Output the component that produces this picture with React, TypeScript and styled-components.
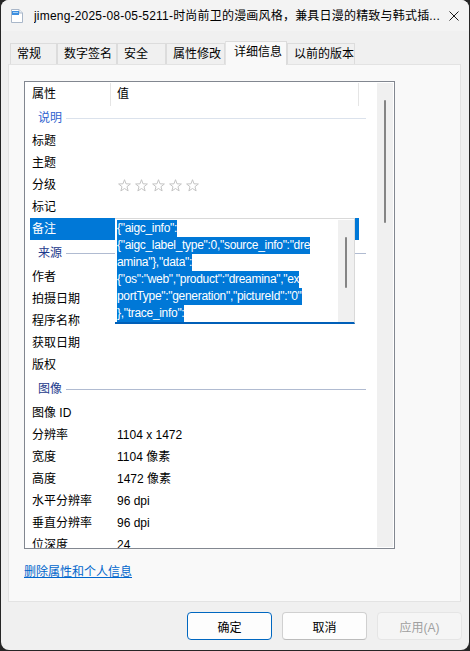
import React from 'react';
import styled, { createGlobalStyle } from 'styled-components';

const Global = createGlobalStyle`
  html, body { margin: 0; padding: 0; background: #262626; }
  body {
    font-family: "Liberation Sans", "Noto Sans CJK SC", sans-serif;
    font-size: 12px;
    color: #000;
  }
  * { box-sizing: border-box; }
`;

const Window = styled.div`
  width: 468px;
  height: 650px;
  margin-left: 1px;
  background: #f0f0f0;
  border-radius: 8px;
  overflow: hidden;
  display: flex;
  flex-direction: column;
`;

const TitleBar = styled.div`
  height: 31px;
  flex: none;
  display: flex;
  align-items: center;
  padding: 0 10px 0 9px;
  background: #f3f3f3;
`;

const TitleText = styled.div`
  flex: 1;
  margin-left: 10px;
  white-space: nowrap;
  overflow: hidden;
  line-height: 16px;
  letter-spacing: 0.2px;
`;

const CloseGlyph = styled.svg`
  width: 10px;
  height: 10px;
  flex: none;
`;

const TabStrip = styled.div`
  display: flex;
  align-items: flex-end;
  height: 24px;
  margin: 10px 0 -1px 9px;
  position: relative;
  z-index: 1;
`;

const Tab = styled.div<{ $w: number; $active?: boolean }>`
  width: ${p => p.$w}px;
  height: ${p => (p.$active ? 24 : 21)}px;
  margin-bottom: ${p => (p.$active ? 0 : 1)}px;
  padding: 0 0 ${p => (p.$active ? 3 : 0)}px ${p => (p.$active ? 8 : 6)}px;
  display: flex;
  align-items: center;
  background: ${p => (p.$active ? '#f9f9f9' : '#f0f0f0')};
  border: 1px solid #dcdcdc;
  border-bottom: none;
  border-left-color: ${p => (p.$active ? '#e3e3e3' : '#dcdcdc')};
  white-space: nowrap;
  line-height: 16px;
`;

const Panel = styled.div`
  height: 538px;
  margin: 0 8px 0 7px;
  background: #f9f9f9;
  border: 1px solid #e3e3e3;
  padding: 16px 0 0 15px;
  display: flex;
  flex-direction: column;
`;

const ListBox = styled.div`
  width: 371px;
  height: 468px;
  border: 1px solid #828790;
  background: #fff;
  display: flex;
`;

const ListContent = styled.div`
  position: relative;
  width: 352px;
  overflow: hidden;
  flex: none;
`;

const ScrollTrack = styled.div<{ $w: number }>`
  width: ${p => p.$w}px;
  margin: 1px 1px 1px 0;
  background: #f0f0f0;
  display: flex;
  justify-content: center;
  flex: none;
`;

const ScrollThumb = styled.div<{ $top: number; $h: number }>`
  width: 2px;
  height: ${p => p.$h}px;
  margin-top: ${p => p.$top}px;
  background: #858585;
  border-radius: 1px;
`;

const HeaderRow = styled.div`
  height: 24px;
  display: flex;
`;

const HeaderCell = styled.div<{ $w: number; $pad: number }>`
  width: ${p => p.$w}px;
  padding-left: ${p => p.$pad}px;
  line-height: 24px;
  flex: none;
`;

const HeaderDivider = styled.div`
  width: 1px;
  height: 23px;
  margin-top: 1px;
  background: #e5e5e5;
  flex: none;
`;

const GroupRow = styled.div<{ $h: number; $lit?: boolean }>`
  height: ${p => p.$h}px;
  display: flex;
  align-items: center;
  padding-left: 13px;
  color: ${p => (p.$lit ? '#2f63cf' : '#1d3a8c')};
  &::after {
    content: '';
    width: 300px;
    height: 1px;
    margin-left: 4px;
    background: ${p => (p.$lit ? '#dbe2ec' : '#b0bbd1')};
  }
`;

const GroupLabel = styled.span`
  width: 24px;
  white-space: nowrap;
  line-height: 16px;
`;

const Row = styled.div<{ $selected?: boolean }>`
  height: 22px;
  width: 329px;
  margin-left: 5px;
  display: flex;
  align-items: center;
  background: ${p => (p.$selected ? '#0078d7' : 'transparent')};
  color: ${p => (p.$selected ? '#fff' : '#000')};
`;

const NameCell = styled.div`
  width: 80px;
  padding-left: 2px;
  flex: none;
  white-space: nowrap;
  line-height: 16px;
`;

const ValueCell = styled.div`
  padding-left: 7px;
  display: flex;
  align-items: center;
  white-space: nowrap;
  line-height: 16px;
`;

const Stars = styled.div`
  display: flex;
  gap: 4px;
  margin-left: 1px;
`;

const EditBox = styled.div`
  position: absolute;
  left: 90px;
  top: 136px;
  width: 240px;
  height: 106px;
  background: #fff;
  border-top: 1px solid #d9d9d9;
  border-right: 1px solid #d9d9d9;
  border-bottom: 2px solid #005fb8;
  display: flex;
`;

const EditText = styled.div`
  flex: 1;
  padding: 1px 0 0 2px;
  overflow: hidden;
`;

const SelLine = styled.span`
  display: block;
  width: max-content;
  height: 17px;
  line-height: 17px;
  background: #0078d7;
  color: #fff;
  white-space: pre;
  letter-spacing: -0.3px;
`;

const EditScroll = styled.div`
  width: 16px;
  margin: 1px 0 0 0;
  background: #f0f0f0;
  display: flex;
  justify-content: center;
  flex: none;
`;

const LinkText = styled.a`
  margin-top: 15px;
  line-height: 16px;
  color: #0066cc;
  text-decoration: underline;
  align-self: flex-start;
  cursor: pointer;
`;

const ButtonRow = styled.div`
  display: flex;
  justify-content: flex-end;
  gap: 10px;
  margin-top: 10px;
  padding-right: 7px;
`;

const Button = styled.button<{ $kind?: 'default' | 'disabled' }>`
  width: 85px;
  height: 28px;
  border-radius: 4px;
  font-family: inherit;
  font-size: 12px;
  padding: 0;
  background: ${p => (p.$kind === 'disabled' ? '#f5f5f5' : '#fdfdfd')};
  color: ${p => (p.$kind === 'disabled' ? '#a0a0a0' : '#000')};
  border: 1px solid
    ${p =>
      p.$kind === 'default' ? '#0067c0' : p.$kind === 'disabled' ? '#e5e5e5' : '#d0d0d0'};
  border-bottom-color: ${p =>
    p.$kind === 'default' ? '#0067c0' : p.$kind === 'disabled' ? '#e5e5e5' : '#bcbcbc'};
`;

const Star = () => (
  <svg width="13" height="13" viewBox="0 0 13 13">
    <polygon
      points="6.5,0.7 8.03,4.8 12.4,4.98 8.97,7.7 10.14,11.92 6.5,9.5 2.86,11.92 4.03,7.7 0.6,4.98 4.97,4.8"
      fill="#fff"
      stroke="#c4c4c4"
      strokeWidth="1"
      strokeLinejoin="round"
    />
  </svg>
);

const FileIcon = () => (
  <svg width="14" height="16" viewBox="0 0 14 16">
    <path d="M1.5 1.5 H9 L12.5 5 V14.5 H1.5 Z" fill="#fff" stroke="#a9b7c9" />
    <path d="M9 1.5 V5 H12.5" fill="#e8eef5" stroke="#a9b7c9" />
    <rect x="2" y="3" width="7" height="4" fill="#3d8fe0" />
    <rect x="3" y="4" width="5" height="1" fill="#a7d0f5" />
  </svg>
);

const tabs: [string, number][] = [
  ['常规', 47],
  ['数字签名', 60],
  ['安全', 49],
  ['属性修改', 59],
  ['详细信息', 62],
  ['以前的版本', 68],
];

const descRows: [string, string][] = [
  ['标题', ''],
  ['主题', ''],
  ['分级', '*'],
  ['标记', ''],
  ['备注', ''],
];

const originRows = ['作者', '拍摄日期', '程序名称', '获取日期', '版权'];

const imageRows: [string, string][] = [
  ['图像 ID', ''],
  ['分辨率', '1104 x 1472'],
  ['宽度', '1104 像素'],
  ['高度', '1472 像素'],
  ['水平分辨率', '96 dpi'],
  ['垂直分辨率', '96 dpi'],
  ['位深度', '24'],
];

const commentLines = [
  '{"aigc_info":',
  '{"aigc_label_type":0,"source_info":"dre',
  'amina"},"data":',
  '{"os":"web","product":"dreamina","ex',
  'portType":"generation","pictureId":"0"',
  '},"trace_info":',
];

export default function App() {
  return (
    <>
      <Global />
      <Window>
        <TitleBar>
          <FileIcon />
          <TitleText>jimeng-2025-08-05-5211-时尚前卫的漫画风格，兼具日漫的精致与韩式插...</TitleText>
          <CloseGlyph viewBox="0 0 10 10">
            <path d="M0.5 0.5 L9.5 9.5 M9.5 0.5 L0.5 9.5" stroke="#1a1a1a" strokeWidth="1" />
          </CloseGlyph>
        </TitleBar>

        <TabStrip>
          {tabs.map(([label, w]) => (
            <Tab key={label} $w={w} $active={label === '详细信息'}>
              {label}
            </Tab>
          ))}
        </TabStrip>

        <Panel>
          <ListBox>
            <ListContent>
              <HeaderRow>
                <HeaderCell $w={85} $pad={7}>属性</HeaderCell>
                <HeaderDivider />
                <HeaderCell $w={247} $pad={6}>值</HeaderCell>
                <HeaderDivider />
              </HeaderRow>

              <GroupRow $h={24} $lit>
                <GroupLabel>说明</GroupLabel>
              </GroupRow>
              {descRows.map(([name, value]) => (
                <Row key={name} $selected={name === '备注'}>
                  <NameCell>{name}</NameCell>
                  <ValueCell>
                    {value === '*' ? (
                      <Stars>
                        <Star />
                        <Star />
                        <Star />
                        <Star />
                        <Star />
                      </Stars>
                    ) : (
                      value
                    )}
                  </ValueCell>
                </Row>
              ))}

              <GroupRow $h={26}>
                <GroupLabel>来源</GroupLabel>
              </GroupRow>
              {originRows.map(name => (
                <Row key={name}>
                  <NameCell>{name}</NameCell>
                </Row>
              ))}

              <GroupRow $h={26}>
                <GroupLabel>图像</GroupLabel>
              </GroupRow>
              {imageRows.map(([name, value]) => (
                <Row key={name}>
                  <NameCell>{name}</NameCell>
                  <ValueCell>{value}</ValueCell>
                </Row>
              ))}

              <EditBox>
                <EditText>
                  {commentLines.map((line, i) => (
                    <SelLine key={i}>{line}</SelLine>
                  ))}
                </EditText>
                <EditScroll>
                  <ScrollThumb $top={17} $h={51} />
                </EditScroll>
              </EditBox>
            </ListContent>
            <ScrollTrack $w={16}>
              <ScrollThumb $top={17} $h={123} />
            </ScrollTrack>
          </ListBox>

          <LinkText>删除属性和个人信息</LinkText>
        </Panel>

        <ButtonRow>
          <Button $kind="default">确定</Button>
          <Button>取消</Button>
          <Button $kind="disabled">应用(A)</Button>
        </ButtonRow>
      </Window>
    </>
  );
}
